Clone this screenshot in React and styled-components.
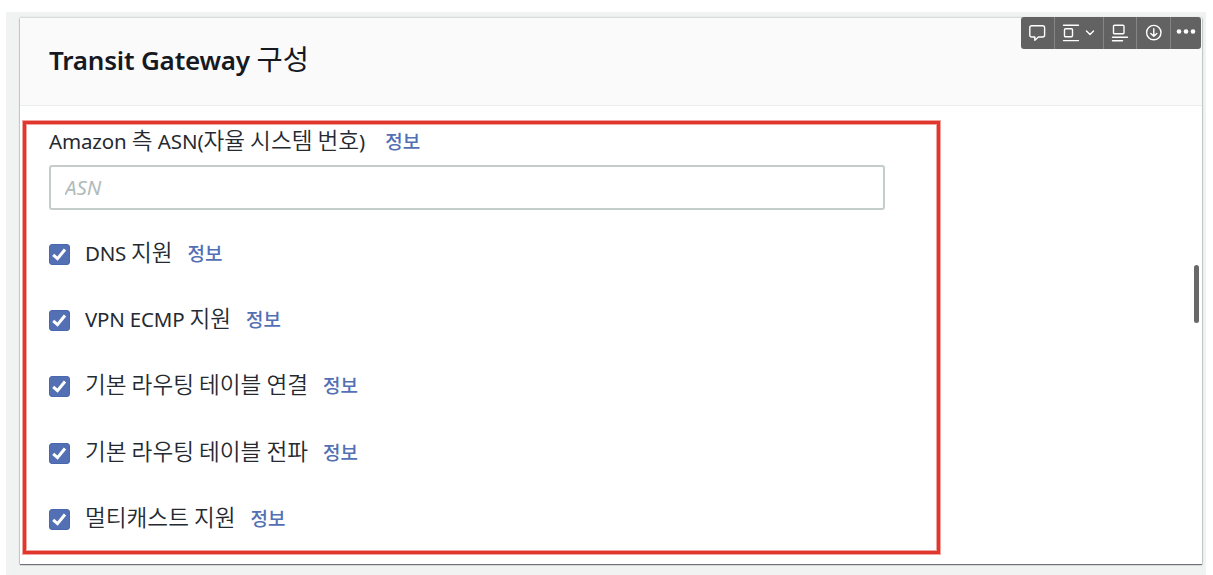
import React, { useState } from "react";
import styled, { createGlobalStyle } from "styled-components";

const GlobalStyle = createGlobalStyle`
    * {
        box-sizing: border-box;
    }
    body {
        margin: 0;
        background-color: #ffffff;
        font-family: "Noto Sans", "Noto Sans CJK KR", sans-serif;
        overflow: hidden;
    }
`;

const Page = styled.div`
    height: 575px;
    padding: 12px 7px 0 6px;
`;
const Canvas = styled.main`
    height: 563px;
    padding: 6px 4px 11px 14px;
    background-color: #f1f3f3;
`;
const Card = styled.section`
    position: relative;
    height: 546px;
    background-color: #ffffff;
    box-shadow: 0 1px 1px 0 rgba(0, 10, 20, 0.5), 0 0 2px 0 rgba(0, 28, 36, 0.35);
`;
const CardHeader = styled.header`
    display: flex;
    align-items: center;
    height: 88px;
    padding: 0 0 5px 29px;
    background-color: #fafafa;
    border-bottom: 1px solid #eaeded;
`;
const Title = styled.h2`
    display: flex;
    align-items: baseline;
    margin: 0;
    font-size: 26px;
    line-height: 36px;
    font-weight: 600;
    color: #16191f;
    white-space: pre;
`;
const Latin = styled.span`
    font-family: "Noto Sans", sans-serif;
    letter-spacing: ${props => props.spacing || 0}px;
`;
const Korean = styled.span`
    font-family: "Noto Sans CJK KR", sans-serif;
    font-size: ${props => props.size || 22.6}px;
    font-weight: ${props => props.weight || 350};
`;
const Highlight = styled.div`
    width: 917px;
    height: 433px;
    margin: 15px 0 0 3px;
    padding: 0 0 0 23px;
    border: 3px solid #e0362b;
    box-shadow: 0 0 0 1px rgba(224, 54, 43, 0.45), inset 0 0 0 1px rgba(224, 54, 43, 0.45);
`;
const FieldLabel = styled.label`
    display: flex;
    align-items: baseline;
    height: 41px;
    font-size: 20.5px;
    line-height: 32px;
    color: #252a31;
    white-space: pre;
`;
const Info = styled.a`
    margin-left: ${props => props.gap || 15}px;
    font-family: "Noto Sans CJK KR", sans-serif;
    font-size: 19px;
    font-weight: 500;
    color: #5470b5;
    text-decoration: none;
    cursor: pointer;
`;
const Input = styled.input`
    display: block;
    width: 836px;
    height: 45px;
    padding: 0 14px 2px;
    border: 2px solid #c5cccc;
    border-radius: 3px;
    outline: none;
    background-color: #ffffff;
    font-family: "Noto Sans", sans-serif;
    font-size: 20.5px;
    color: #16191f;
    &::placeholder {
        color: #b2bbbb;
        font-style: italic;
        opacity: 1;
    }
`;
const Options = styled.div`
    display: flex;
    flex-direction: column;
    gap: 44.4px;
    margin-top: 33px;
`;
const Option = styled.div`
    display: flex;
    align-items: center;
    height: 22px;
`;
const Check = styled.button`
    display: flex;
    align-items: center;
    justify-content: center;
    width: 21px;
    height: 21px;
    margin-right: 15px;
    padding: 0;
    border: 1px solid #4a68ad;
    border-radius: 3px;
    background-color: ${props => props.checked ? "#5470b5" : "#ffffff"};
`;
const OptionText = styled.span`
    display: flex;
    align-items: baseline;
    margin-top: -4px;
    font-size: 20.5px;
    line-height: 32px;
    color: #252a31;
    white-space: pre;
`;
const Toolbar = styled.div`
    position: absolute;
    top: -1px;
    right: 1px;
    display: flex;
    width: 180px;
    height: 32px;
    border-radius: 3px;
    overflow: hidden;
    background-color: #626262;
`;
const Tool = styled.button`
    display: flex;
    align-items: center;
    justify-content: center;
    width: ${props => props.wide}px;
    padding: 0;
    border: none;
    border-right: ${props => props.last ? "none" : "1px solid #858585"};
    background: none;
    color: #ffffff;
`;
const ScrollThumb = styled.div`
    position: absolute;
    top: 247px;
    right: 3px;
    width: 5px;
    height: 58px;
    border-radius: 3px;
    background-color: #696969;
`;

const options = [
    { latin: "DNS ", spacing: -0.3, korean: "지원" },
    { latin: "VPN ECMP ", spacing: -0.2, korean: "지원" },
    { korean: "기본 라우팅 테이블 연결" },
    { korean: "기본 라우팅 테이블 전파" },
    { korean: "멀티캐스트 지원" }
];

const Icon = ({ width = 18, children }) => (
    <svg width={width} height="18" viewBox={`0 0 ${width} 18`} fill="none" stroke="currentColor" strokeWidth="1.4" strokeLinecap="round" strokeLinejoin="round">
        {children}
    </svg>
);

const ImageToolbar = () => (
    <Toolbar>
        <Tool wide={34} aria-label="comment">
            <Icon>
                <path d="M2.8 1.8H13.6Q15.6 1.8 15.6 3.8V11Q15.6 13 13.6 13H9.5L5.8 16.2V13H2.8Q0.8 13 0.8 11V3.8Q0.8 1.8 2.8 1.8Z" />
            </Icon>
        </Tool>
        <Tool wide={49} aria-label="align">
            <Icon width={34}>
                <path d="M1.5 1.2H16.5M1.5 16.6H16.5" />
                <rect x="2.5" y="4.8" width="8" height="8" rx="1" />
                <path d="M24.5 7L28 10.5L31.5 7" />
            </Icon>
        </Tool>
        <Tool wide={33} aria-label="caption">
            <Icon>
                <rect x="2.5" y="1.2" width="10.5" height="8.5" rx="1" />
                <path d="M1.5 13.2H16.5M1.5 16.8H11.5" />
            </Icon>
        </Tool>
        <Tool wide={34} aria-label="download">
            <Icon>
                <circle cx="8.8" cy="8.6" r="7.2" />
                <path d="M8.8 4.8V12M5.8 9.4L8.8 12.2L11.8 9.4" />
            </Icon>
        </Tool>
        <Tool wide={30} last aria-label="more">
            <svg width="20" height="8" viewBox="0 0 20 8" fill="currentColor">
                <circle cx="3" cy="2.5" r="2.3" />
                <circle cx="10" cy="2.5" r="2.3" />
                <circle cx="17" cy="2.5" r="2.3" />
            </svg>
        </Tool>
    </Toolbar>
);

const CheckOption = ({ latin, spacing, korean }) => {
    const [checked, setChecked] = useState(true);
    return (
        <Option>
            <Check role="checkbox" aria-checked={checked} aria-label={korean} checked={checked} onClick={() => setChecked(!checked)}>
                {checked &&
                <svg width="17" height="17" viewBox="0 0 17 17" fill="none" stroke="#ffffff" strokeWidth="3">
                    <path d="M2.2 8.8L6.5 12.7L14 3.5" />
                </svg>}
            </Check>
            <OptionText>
                {latin && <Latin spacing={spacing}>{latin}</Latin>}
                <Korean>{korean}</Korean>
                <Info>정보</Info>
            </OptionText>
        </Option>
    );
};

const App = () => (
    <>
        <GlobalStyle />
        <Page>
            <Canvas>
                <Card>
                    <CardHeader>
                        <Title>
                            <Latin spacing={-0.2}>Transit Gateway </Latin>
                            <Korean size={28.5} weight={400}>구성</Korean>
                        </Title>
                    </CardHeader>
                    <Highlight>
                        <FieldLabel>
                            <Latin spacing={-0.15}>Amazon </Latin>
                            <Korean>측</Korean>
                            <Latin spacing={-0.1}> ASN(</Latin>
                            <Korean>자율 시스템 번호</Korean>
                            <Latin>)</Latin>
                            <Info gap={20}>정보</Info>
                        </FieldLabel>
                        <Input placeholder="ASN" />
                        <Options>
                            {options.map((option, index) => <CheckOption key={index} {...option} />)}
                        </Options>
                    </Highlight>
                    <ImageToolbar />
                    <ScrollThumb />
                </Card>
            </Canvas>
        </Page>
    </>
);

export default App;
